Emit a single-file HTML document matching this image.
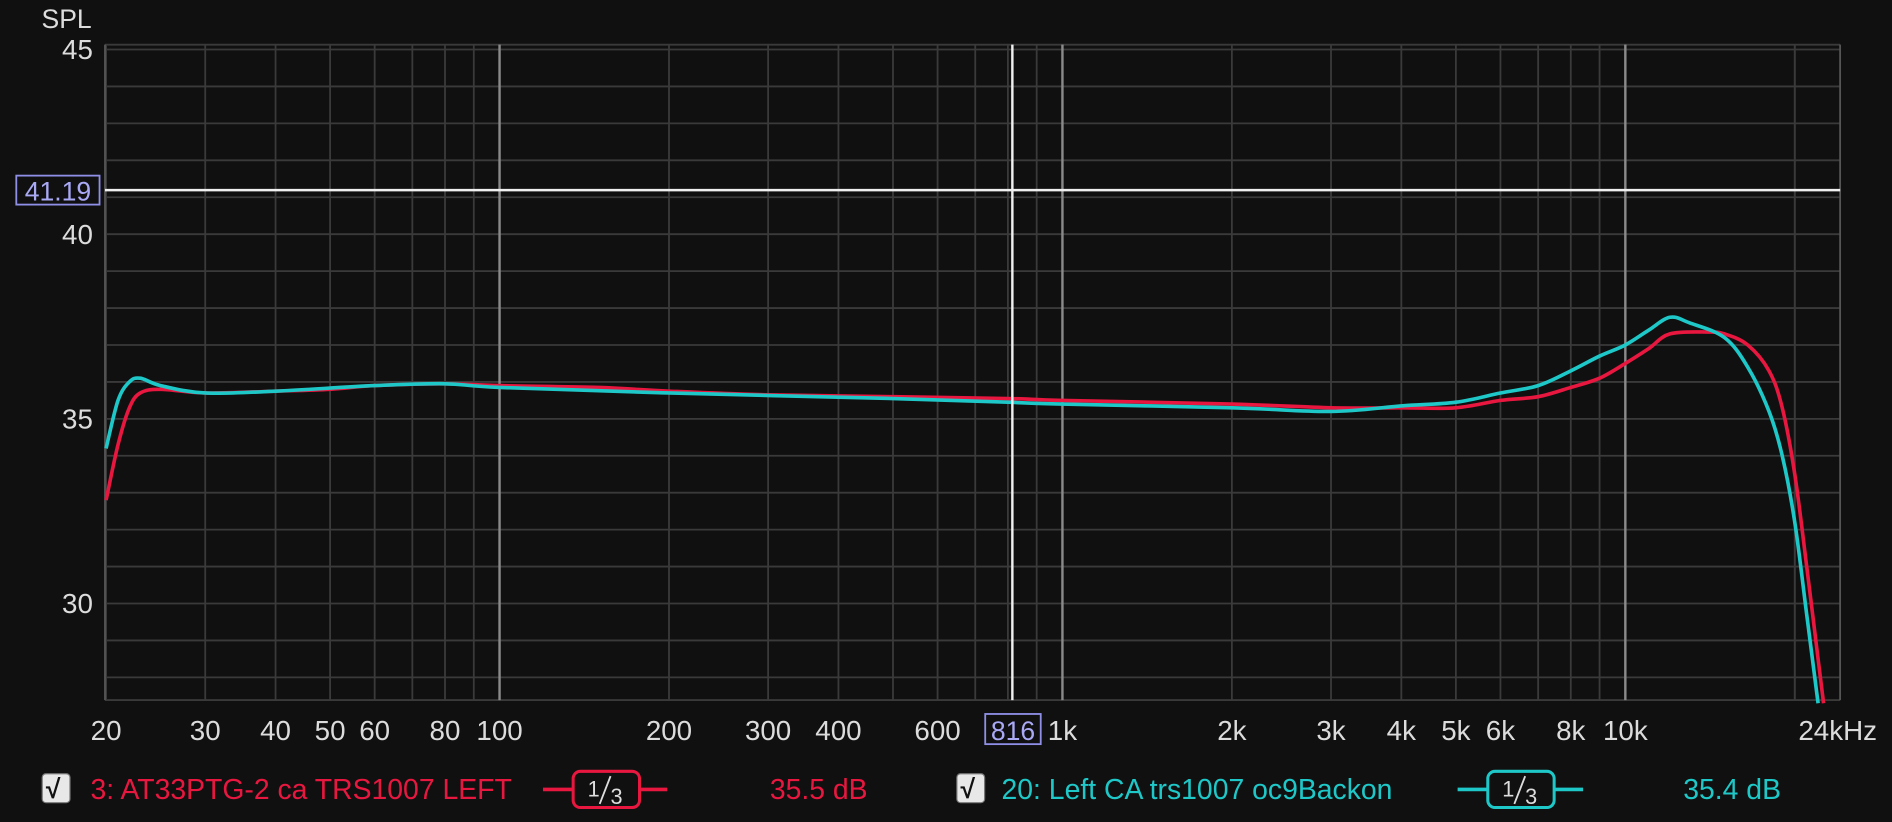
<!DOCTYPE html>
<html><head><meta charset="utf-8"><style>
html,body{margin:0;padding:0;background:#101010;width:1892px;height:822px;overflow:hidden}
svg{display:block}
text{font-family:"Liberation Sans",sans-serif}
</style></head><body>
<svg id="s" width="1892" height="822" viewBox="0 0 1568 681" preserveAspectRatio="none">
<rect width="1568" height="681" fill="#101010"/>
<g id="grid"></g>
<g id="curves"></g>
<g id="labels" fill="#dcdcdc" font-size="23"></g>
<line x1="87" y1="157.5" x2="1525" y2="157.5" stroke="#f0f0f0" stroke-width="2"/>
<line x1="839" y1="37" x2="839" y2="580" stroke="#f0f0f0" stroke-width="2"/>
<rect x="13.5" y="145.5" width="69" height="24" fill="#101010" stroke="#8f8fe8" stroke-width="1.5"/>
<text x="48" y="166" text-anchor="middle" fill="#a9a9f5" font-size="22">41.19</text>
<rect x="816.5" y="591.5" width="46" height="25" fill="#101010" stroke="#8f8fe8" stroke-width="1.5"/>
<text x="839.5" y="613" text-anchor="middle" fill="#a9a9f5" font-size="22">816</text>
<text x="76" y="23" text-anchor="end" fill="#dcdcdc" font-size="22">SPL</text>
<g font-size="23.5">
<rect x="35" y="641" width="23" height="24" rx="3" fill="#e8e8e8" stroke="#777"/>
<text x="38" y="661" fill="#111" font-size="22" font-weight="bold">√</text>
<text x="75" y="662" fill="#e8173f">3: AT33PTG-2 ca TRS1007 LEFT</text>
<line x1="450" y1="654" x2="553" y2="654" stroke="#e8173f" stroke-width="3"/>
<rect x="475" y="639" width="55" height="30" rx="6" fill="#101010" stroke="#e8173f" stroke-width="2.5"/>
<text x="487" y="660" fill="#ddd" font-size="18">1</text><line x1="497" y1="666" x2="506" y2="643" stroke="#ddd" stroke-width="1.5"/><text x="506" y="666" fill="#ddd" font-size="18">3</text>
<text x="638" y="662" fill="#e8173f">35.5 dB</text>
<rect x="793" y="641" width="23" height="24" rx="3" fill="#e8e8e8" stroke="#777"/>
<text x="796" y="661" fill="#111" font-size="22" font-weight="bold">√</text>
<text x="830" y="662" fill="#1fc8c8">20: Left CA trs1007 oc9Backon</text>
<line x1="1208" y1="654" x2="1312" y2="654" stroke="#1fc8c8" stroke-width="3"/>
<rect x="1233" y="639" width="55" height="30" rx="6" fill="#101010" stroke="#1fc8c8" stroke-width="2.5"/>
<text x="1245" y="660" fill="#ddd" font-size="18">1</text><line x1="1255" y1="666" x2="1264" y2="643" stroke="#ddd" stroke-width="1.5"/><text x="1264" y="666" fill="#ddd" font-size="18">3</text>
<text x="1395" y="662" fill="#1fc8c8">35.4 dB</text>
</g>
</svg>
<script>
const NS="http://www.w3.org/2000/svg";
const L=87,R=1525,T=37,B=580;
const X=f=>414+466.5*Math.log10(f/100);
const Y=d=>347-(d-35)*30.6;
const g=document.getElementById('grid'),lab=document.getElementById('labels');
function ln(x1,y1,x2,y2,c,w){const e=document.createElementNS(NS,'line');e.setAttribute('x1',x1);e.setAttribute('y1',y1);e.setAttribute('x2',x2);e.setAttribute('y2',y2);e.setAttribute('stroke',c);e.setAttribute('stroke-width',w);g.appendChild(e);}
function tx(x,y,s,a){const e=document.createElementNS(NS,'text');e.setAttribute('x',x);e.setAttribute('y',y);e.setAttribute('text-anchor',a||'middle');e.textContent=s;lab.appendChild(e);}
for(let d=28;d<=45;d++){const y=Y(d);if(y<T||y>B)continue;ln(L,y,R,y,'#3a3a3a',1.5);}
ln(L,T,R,T,'#3a3a3a',1.5);ln(L,B,R,B,'#3a3a3a',1.5);
const fs=[];for(const dec of [10,100,1000,10000])for(let i=1;i<10;i++){const f=dec*i;if(f>=20&&f<=24000)fs.push(f);}fs.push(20000);
fs.forEach(f=>{const x=X(f);const major=(f==100||f==1000||f==10000);ln(x,T,x,B,major?'#8a8a8a':'#3a3a3a',major?2:1.5);});
ln(L,T,L,B,'#555',1.5);ln(R,T,R,B,'#555',1.5);
[45,40,35,30].forEach(d=>tx(77,Y(d)+8,d,'end'));
[[20,'20'],[30,'30'],[40,'40'],[50,'50'],[60,'60'],[80,'80'],[100,'100'],[200,'200'],[300,'300'],[400,'400'],[600,'600'],[1000,'1k'],[2000,'2k'],[3000,'3k'],[4000,'4k'],[5000,'5k'],[6000,'6k'],[8000,'8k'],[10000,'10k']].forEach(([f,s])=>tx(X(f),613,s));
tx(1523,613,'24kHz');
function curve(pts,c){const P=pts.map(([f,d])=>[X(f),Y(d)]);let d='M'+P[0][0]+','+P[0][1];
for(let i=0;i<P.length-1;i++){const p0=P[Math.max(0,i-1)],p1=P[i],p2=P[i+1],p3=P[Math.min(P.length-1,i+2)];
d+=` C${p1[0]+(p2[0]-p0[0])/6},${p1[1]+(p2[1]-p0[1])/6} ${p2[0]-(p3[0]-p1[0])/6},${p2[1]-(p3[1]-p1[1])/6} ${p2[0]},${p2[1]}`;}
const e=document.createElementNS(NS,'path');e.setAttribute('d',d);e.setAttribute('fill','none');e.setAttribute('stroke',c);e.setAttribute('stroke-width',3);document.getElementById('curves').appendChild(e);}
curve([[20,32.8],[21,34.3],[22,35.3],[23,35.7],[25,35.8],[30,35.7],[40,35.75],[50,35.8],[60,35.9],[80,35.95],[100,35.9],[150,35.85],[200,35.75],[300,35.65],[500,35.6],[800,35.55],[1000,35.5],[2000,35.4],[3000,35.3],[4000,35.3],[5000,35.3],[6000,35.5],[7000,35.6],[8000,35.85],[9000,36.1],[10000,36.5],[11000,36.9],[12000,37.3],[14000,37.35],[15000,37.3],[16500,37.0],[18000,36.3],[19000,35.3],[20000,33.5],[21000,31],[22000,28.5],[22500,27.3]],'#e8173f');
curve([[20,34.2],[21,35.5],[22,36.0],[23,36.1],[25,35.9],[30,35.7],[40,35.75],[60,35.9],[80,35.95],[100,35.85],[200,35.7],[500,35.55],[800,35.45],[1000,35.4],[2000,35.3],[3000,35.2],[4000,35.35],[5000,35.45],[6000,35.7],[7000,35.9],[8000,36.3],[9000,36.7],[10000,37.0],[11000,37.4],[12000,37.75],[13000,37.6],[15000,37.2],[16500,36.4],[18000,35.2],[19000,34],[20000,32.2],[21000,29.7],[22000,27.3]],'#1fc8c8');
</script>
</body></html>
